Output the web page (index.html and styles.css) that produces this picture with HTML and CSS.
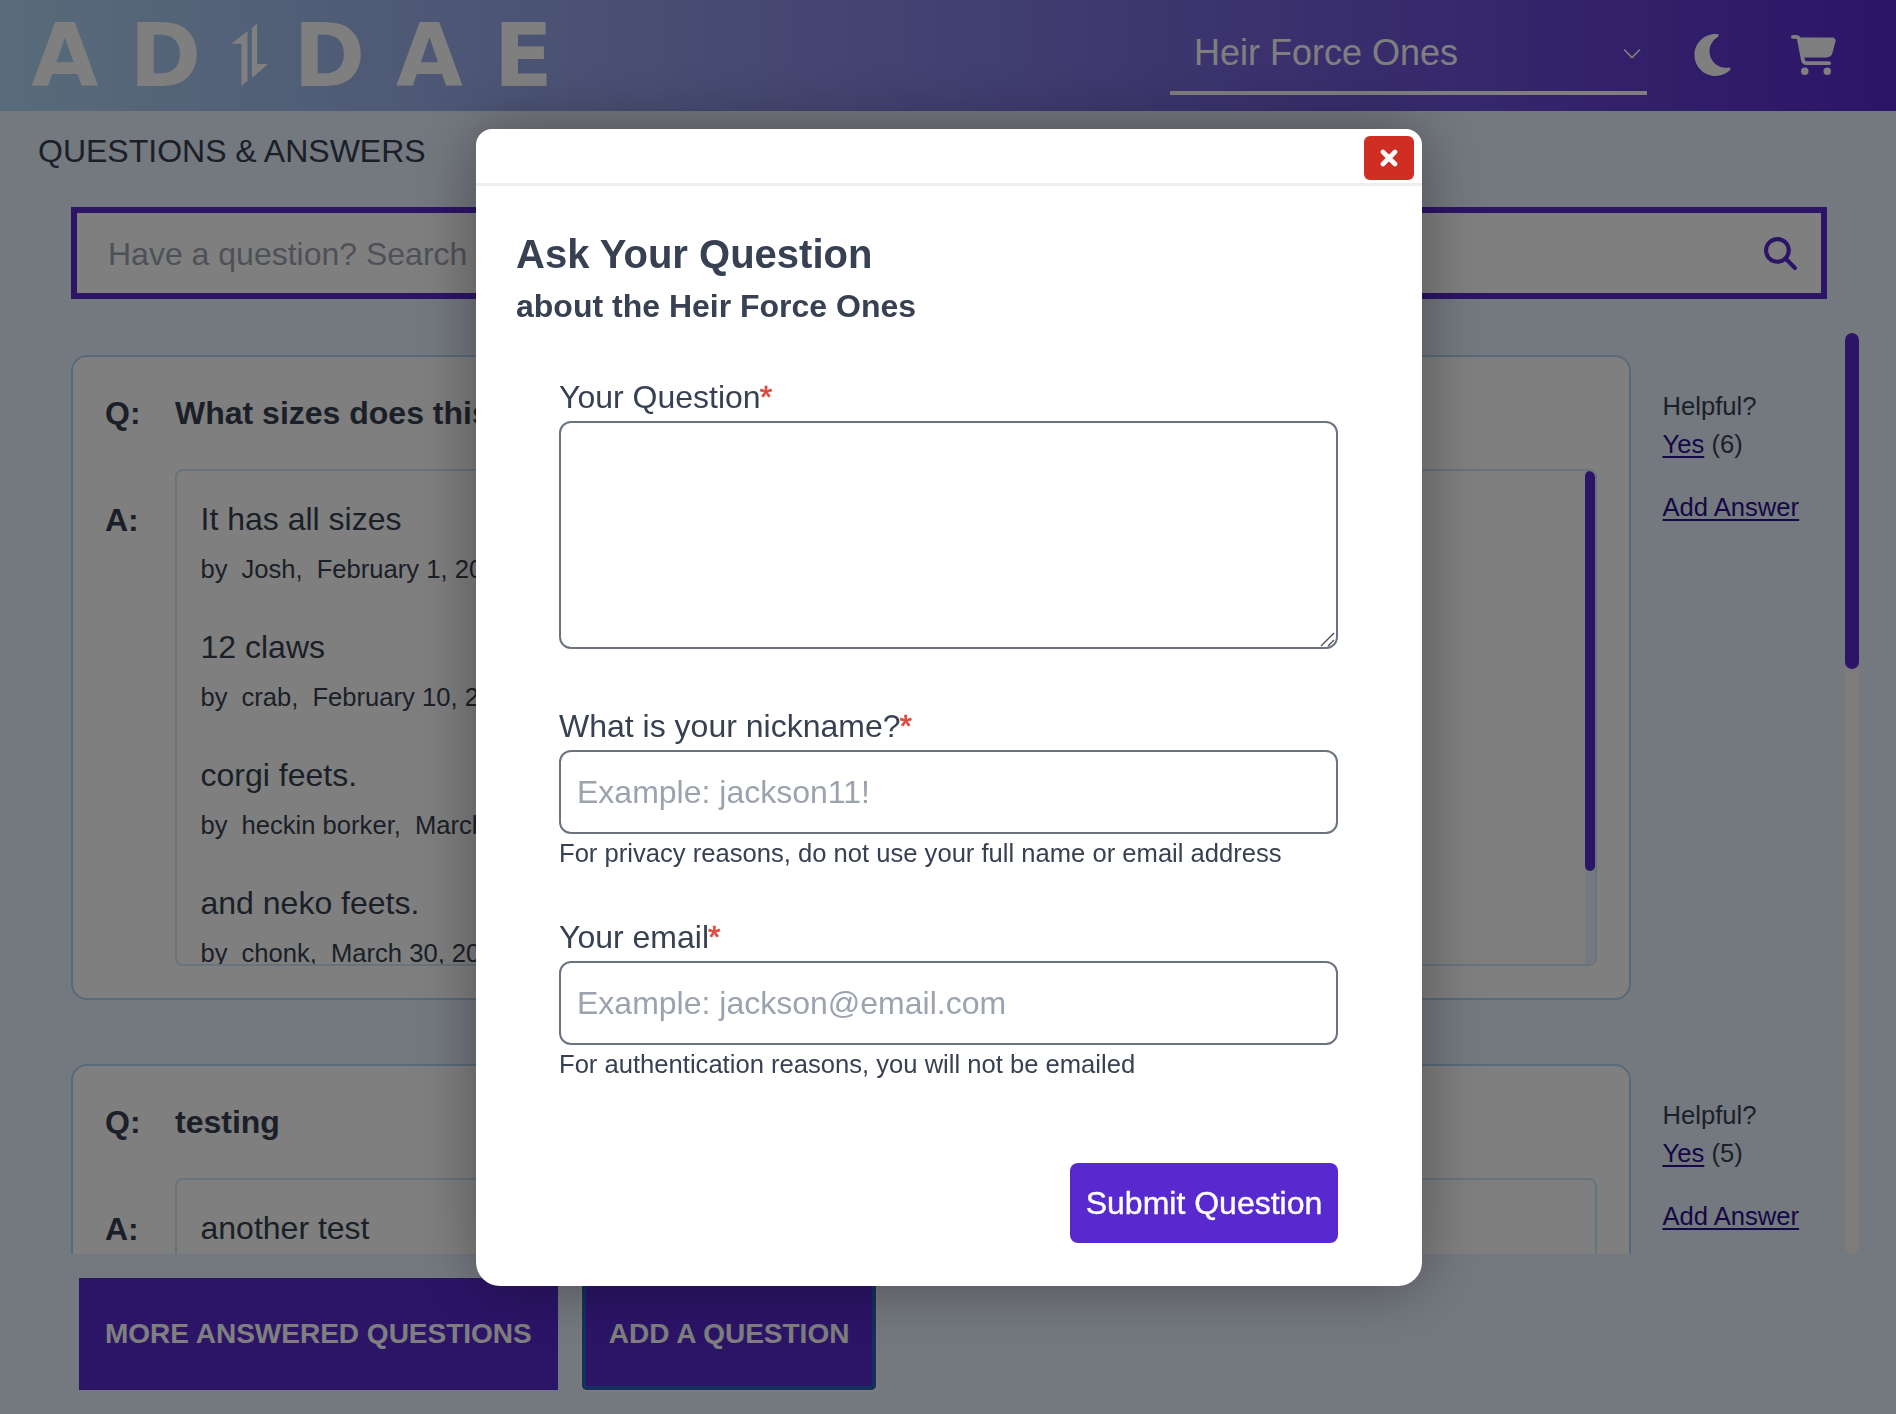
FILE: index.html
```html
<!DOCTYPE html>
<html lang="en">
<head>
<meta charset="utf-8">
<title>Questions &amp; Answers</title>
<link rel="stylesheet" href="styles.css">
</head>
<body>
<div class="page">
  <header class="topbar">
    <svg class="logo" width="560" height="111" viewBox="0 0 560 111">
      <text class="logo-text" y="86.3" x="31.4 129.6 293.6 396 493.8">ADDAE</text>
      <path d="M247.5 31L231.4 43.7H241.4V86L247.5 81ZM257.1 23.7L251.9 28V78L268 64H257.1Z" fill="#fff"/>
    </svg>
    <div class="product-select">
      <span>Heir Force Ones</span>
      <svg class="chevron" width="18" height="12" viewBox="0 0 18 12"><path d="M1 1.5L9 9.5L17 1.5" fill="none" stroke="#fff" stroke-width="1.6"/></svg>
    </div>
    <svg class="moon" width="37" height="48" viewBox="0 0 384 512"><path fill="#fff" d="M223.5 32C100 32 0 132.3 0 256S100 480 223.5 480c60.6 0 115.5-24.2 155.8-63.4c5-4.9 6.3-12.5 3.1-18.7s-10.1-9.7-17-8.5c-9.8 1.7-19.8 2.6-30.1 2.6c-96.9 0-175.5-78.8-175.5-176c0-65.8 36-123.1 89.3-153.3c6.1-3.5 9.2-10.5 7.7-17.3s-7.3-11.9-14.3-12.5c-6.3-.5-12.6-.8-19-.8z"/></svg>
    <svg class="cart" width="45" height="40" viewBox="0 0 576 512"><path fill="#fff" d="M0 24C0 10.7 10.7 0 24 0H69.5c22 0 41.5 12.8 50.6 32h411c26.3 0 45.5 25 38.6 50.4l-41 152.3c-8.5 31.4-37 53.3-69.5 53.3H170.7l5.4 28.5c2.2 11.3 12.1 19.5 23.6 19.5H488c13.3 0 24 10.7 24 24s-10.7 24-24 24H199.7c-34.6 0-64.3-24.6-70.7-58.5L77.4 54.5c-.7-3.8-4-6.5-7.9-6.5H24C10.7 48 0 37.3 0 24zM128 464a48 48 0 1 1 96 0 48 48 0 1 1 -96 0zm336-48a48 48 0 1 1 0 96 48 48 0 1 1 0-96z"/></svg>
  </header>

  <h2 class="section-title">QUESTIONS &amp; ANSWERS</h2>

  <div class="search">
    <span class="search-hint">Have a question? Search</span>
    <svg width="33" height="33" viewBox="0 0 512 512"><path fill="#5829cf" d="M416 208c0 45.9-14.9 88.3-40 122.7L502.6 457.4c12.5 12.5 12.5 32.8 0 45.3s-32.8 12.5-45.3 0L330.7 376c-34.4 25.2-76.8 40-122.7 40C93.1 416 0 322.9 0 208S93.1 0 208 0S416 93.1 416 208zM208 352a144 144 0 1 0 0-288 144 144 0 1 0 0 288z"/></svg>
  </div>

  <div class="list">
    <div class="entries">
      <section class="entry">
        <article class="card">
          <b class="mark">Q:</b><h3 class="question">What sizes does this</h3>
          <b class="mark mark-a">A:</b>
          <div class="answers">
            <div class="answers-body">
              <div class="answer"><p>It has all sizes</p><div class="meta"><span>by</span><span>Josh,</span><span>February 1, 20</span></div></div>
              <div class="answer"><p>12 claws</p><div class="meta"><span>by</span><span>crab,</span><span>February 10, 2</span></div></div>
              <div class="answer"><p>corgi feets.</p><div class="meta"><span>by</span><span>heckin borker,</span><span>March</span></div></div>
              <div class="answer"><p>and neko feets.</p><div class="meta"><span>by</span><span>chonk,</span><span>March 30, 20</span></div></div>
            </div>
            <div class="inner-track"><div class="inner-thumb"></div></div>
          </div>
        </article>
        <aside class="side">
          <div>Helpful?</div>
          <div><a>Yes</a> (6)</div>
          <div class="add"><a>Add Answer</a></div>
        </aside>
      </section>
      <section class="entry">
        <article class="card">
          <b class="mark">Q:</b><h3 class="question">testing</h3>
          <b class="mark mark-a">A:</b>
          <div class="answers">
            <div class="answers-body">
              <div class="answer"><p>another test</p></div>
            </div>
          </div>
        </article>
        <aside class="side">
          <div>Helpful?</div>
          <div><a>Yes</a> (5)</div>
          <div class="add"><a>Add Answer</a></div>
        </aside>
      </section>
    </div>
    <div class="outer-track"><div class="outer-thumb"></div></div>
  </div>

  <div class="actions">
    <button class="action">MORE ANSWERED QUESTIONS</button>
    <button class="action action-focus">ADD A QUESTION</button>
  </div>
</div>

<div class="overlay">
  <div class="modal">
    <div class="modal-head">
      <button class="close" aria-label="Close"><svg width="18" height="18" viewBox="0 0 18 18"><path d="M3 3L15 15M15 3L3 15" stroke="#fff" stroke-width="4.6" stroke-linecap="round"/></svg></button>
    </div>
    <div class="modal-body">
      <h1 class="modal-title">Ask Your Question</h1>
      <h2 class="modal-sub">about the Heir Force Ones</h2>
      <form class="form">
        <label class="label">Your Question<span class="req">*</span></label>
        <div class="area-wrap">
          <textarea class="area"></textarea>
          <svg class="grip" width="15" height="15" viewBox="0 0 15 15"><path d="M1 14L14 1M8 14L14 8" stroke="#4a4a4a" stroke-width="1.3"/></svg>
        </div>
        <label class="label label-nick">What is your nickname?<span class="req">*</span></label>
        <input class="field" placeholder="Example: jackson11!">
        <p class="hint">For privacy reasons, do not use your full name or email address</p>
        <label class="label label-mail">Your email<span class="req">*</span></label>
        <input class="field" placeholder="Example: jackson@email.com">
        <p class="hint">For authentication reasons, you will not be emailed</p>
        <button type="button" class="submit">Submit Question</button>
      </form>
    </div>
  </div>
</div>
</body>
</html>
```

FILE: styles.css
```css
* { box-sizing: border-box; }
body, h1, h2, h3, p { margin: 0; }
body {
  font-family: "Liberation Sans", Arial, sans-serif;
  font-size: 32px;
  line-height: 40px;
  color: #374151;
  background: #e8f0fe;
  overflow: hidden;
}
button, input, textarea { font: inherit; margin: 0; }
svg { display: block; flex: none; }

.page { height: 1414px; overflow: hidden; }

/* top bar */
.topbar {
  height: 111px;
  display: flex;
  align-items: flex-start;
  background: linear-gradient(to right, #b0d8f4, #5829cf);
}
.logo-text { font: bold 86.4px "DejaVu Sans", sans-serif; fill: #fff; }
.product-select {
  width: 477px;
  height: 95px;
  margin-left: 610px;
  padding: 14px 6px 0 24px;
  border-bottom: 4px solid #fff;
  display: flex;
  align-items: center;
  justify-content: space-between;
  font-size: 36px;
  color: #fff;
}
.chevron { margin-top: 3px; }
.moon { margin: 31px 0 0 47px; }
.cart { margin: 35px 0 0 60px; }

.section-title { margin: 20px 0 0 38px; font-size: 32px; font-weight: 400; }

/* search */
.search {
  width: 1756px;
  height: 92px;
  margin: 36px 0 0 71px;
  padding: 0 24px 0 31px;
  border: 6px solid #5829cf;
  background: #fff;
  display: flex;
  align-items: center;
  justify-content: space-between;
}
.search-hint { color: #9ca3af; padding-top: 2px; }

/* question list */
.list {
  height: 923px;
  margin: 32px 37px 0 71px;
  display: flex;
  justify-content: space-between;
}
.entries {
  padding-top: 24px;
  height: 923px;
  overflow: hidden;
  display: flex;
  flex-direction: column;
  gap: 64px;
}
.entry { display: flex; gap: 31.5px; flex: none; height: 645px; }
.card {
  width: 1560px;
  height: 645px;
  padding: 36px 32px 32px;
  border: 2px solid #aed5f7;
  border-radius: 16px;
  background: #fff;
  display: grid;
  grid-template-columns: 70px 1fr;
  grid-template-rows: 40px 497px;
  row-gap: 36px;
}
.question { font-size: 32px; }
.mark-a { padding-top: 31px; }
.answers {
  border: 2px solid #cfe6fb;
  border-radius: 8px;
  overflow: hidden;
  display: flex;
  justify-content: space-between;
}
.answers-body { padding: 28px 23.5px 0; }
.answer { height: 128px; }
.meta {
  display: flex;
  gap: 14px;
  margin-top: 14px;
  font-size: 25.6px;
  line-height: 32px;
  white-space: nowrap;
}
.inner-track { width: 10px; background: #e8f0fe; }
.inner-thumb { height: 400px; border-radius: 5px; background: #5829cf; }
.side { padding-top: 32px; width: 150px; font-size: 25.6px; line-height: 38px; white-space: nowrap; }
.side a { color: #2c0f8c; text-decoration: underline; text-decoration-thickness: 2px; text-underline-offset: 3px; }
.add { margin-top: 25px; }
.outer-track { width: 14px; padding-top: 2px; border-radius: 7px; background: #fbf9f5; }
.outer-thumb { height: 336px; border-radius: 7px; background: #5829cf; }

.actions { display: flex; gap: 24px; margin: 24px 0 0 79px; }
.action {
  height: 112px;
  padding: 0 26px;
  border: 0;
  background: #5829cf;
  color: #fff;
  font-size: 28px;
  font-weight: 700;
  white-space: nowrap;
}
.action-focus {
  padding: 0 27px;
  border-radius: 5px;
  box-shadow: inset 0 0 0 4px #2563bd, 0 0 0 2px #fff5ec;
}

/* dialog */
.overlay {
  position: fixed;
  inset: 0;
  background: rgba(0, 0, 0, 0.5);
  display: flex;
  justify-content: center;
  align-items: flex-start;
  padding: 129px 0 0 2px;
}
.modal {
  width: 946px;
  height: 1157px;
  border-radius: 16px 16px 24px 24px;
  background: #fff;
  box-shadow: 0 0 64px rgba(0, 0, 0, 0.35);
}
.modal-head {
  height: 57px;
  padding: 7px 8.5px 0;
  border-bottom: 3px solid #eee;
  display: flex;
  justify-content: flex-end;
}
.close {
  width: 50px;
  height: 44px;
  padding: 0;
  border: 0;
  border-radius: 6px;
  background: #d02e22;
  display: flex;
  align-items: center;
  justify-content: center;
}
.modal-body { padding: 44px 84px 0 40px; }
.modal-title { font-size: 40px; line-height: 48px; }
.modal-sub { margin-top: 8px; font-size: 32px; }
.form { display: flex; flex-direction: column; padding: 51px 0 0 43px; }
.label { margin-bottom: 4px; }
.label-nick { margin-top: 57px; }
.label-mail { margin-top: 48px; }
.req { color: #e0483e; margin-left: -1px; -webkit-text-stroke: 0.7px #e0483e; }
.area-wrap { position: relative; height: 228px; }
.area, .field {
  display: block;
  width: 779px;
  height: 84px;
  padding: 0 16px;
  border: 2px solid #6b7280;
  border-radius: 12px;
  background: #fff;
  outline: 0;
}
.area { height: 228px; resize: none; }
.grip { position: absolute; right: 3px; bottom: 2px; }
.field::placeholder { color: #9ca3af; opacity: 1; }
.hint { margin-top: 3px; font-size: 25.6px; line-height: 32px; white-space: nowrap; }
.submit {
  align-self: flex-end;
  width: 268px;
  height: 80px;
  margin-top: 83px;
  padding: 0;
  border: 0;
  border-radius: 8px;
  background: #5829cf;
  color: #fff;
  -webkit-text-stroke: 0.4px #fff;
}
```
